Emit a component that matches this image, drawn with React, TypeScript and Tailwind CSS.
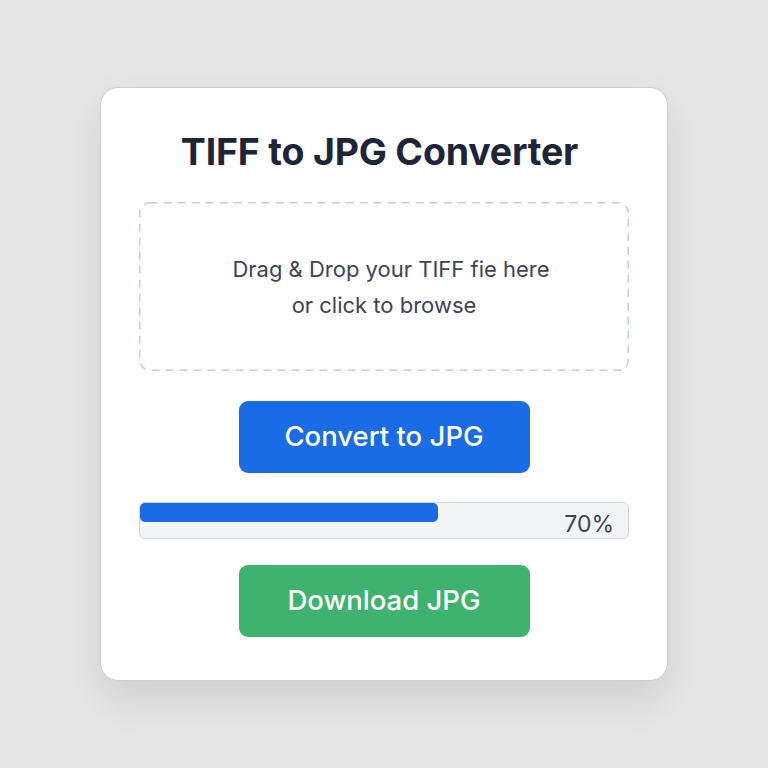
import React from "react";

export default function App() {
  const progress = 61;
  return (
    <div
      className="flex h-[768px] w-[768px] items-start justify-center bg-[#e6e6e6] pt-[87px]"
      style={{ fontFamily: "Inter, 'Noto Sans', sans-serif" }}
    >
      <div className="flex h-[594px] w-[568px] flex-col items-center rounded-[18px] border border-[#cfcfcf] bg-white px-[38px] pt-[42px] shadow-[0_18px_40px_rgba(0,0,0,0.10)]">
        <h1 className="pr-[9px] text-[37.5px] font-bold leading-[44px] tracking-[-0.2px] text-[#1e2538]">
          TIFF to JPG Converter
        </h1>

        <div className="relative mt-[28px] flex h-[169px] w-[490px] flex-col items-center justify-center text-[22px] leading-[36px] text-[#3d4456]">
          {/* dashed drop-zone outline */}
          <svg className="absolute inset-0" width="490" height="169">
            <rect
              x="0.75"
              y="0.75"
              width="488.5"
              height="167.5"
              rx="10"
              fill="none"
              stroke="#c3cfe0"
              strokeWidth="1.5"
              strokeDasharray="8 6"
            />
          </svg>
          <span className="pl-[14px]">Drag &amp; Drop your TIFF fie here</span>
          <span>or click to browse</span>
        </div>

        <button className="mt-[30px] flex h-[72px] w-[291px] items-center justify-center rounded-[9px] bg-[#1a6ce6] text-[27.5px] font-medium text-white">
          Convert to JPG
        </button>

        <div className="relative mt-[29px] h-[37px] w-[490px] rounded-[6px] border border-[#cbd5e1] bg-[#f3f4f6]">
          <div
            className="absolute left-0 top-0 h-[19px] rounded-[5px] bg-[#1a6ce6]"
            style={{ width: `${progress}%` }}
          />
          <span className="absolute bottom-[1px] right-[14px] text-[23px] leading-[26px] text-[#3d4456]">
            70%
          </span>
        </div>

        <button className="mt-[26px] flex h-[72px] w-[291px] items-center justify-center rounded-[9px] bg-[#3eb370] text-[27.5px] font-medium text-white">
          Download JPG
        </button>
      </div>
    </div>
  );
}
